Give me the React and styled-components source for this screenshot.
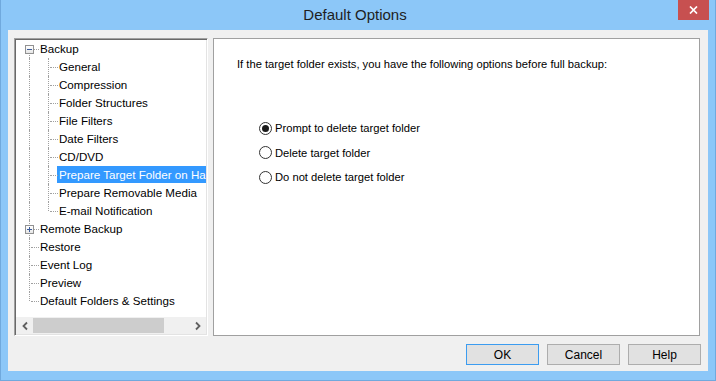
import styled, { createGlobalStyle } from "styled-components";

const GlobalStyle = createGlobalStyle`
  html, body {
    margin: 0;
    padding: 0;
  }
  body {
    width: 716px;
    height: 381px;
    overflow: hidden;
    font-family: "Liberation Sans", Arial, sans-serif;
    color: #000;
  }
`;

const Window = styled.div`
  width: 716px;
  height: 381px;
  box-sizing: border-box;
  background: #8cc7f8;
  border: 1px solid #70a9dd;
  border-top: none;
  padding: 0 7px 9px;
  display: flex;
  flex-direction: column;
`;

const TitleBar = styled.div`
  height: 30px;
  margin: 0 -7px;
  padding-right: 6px;
  display: grid;
  grid-template-columns: 1fr auto 1fr;
  align-items: start;
`;

const Title = styled.div`
  grid-column: 2;
  font-size: 15px;
  line-height: 30px;
  color: #1e1e1e;
`;

const CloseButton = styled.div`
  grid-column: 3;
  justify-self: end;
  width: 31px;
  height: 20px;
  background: #c75050;
  display: flex;
  align-items: center;
  justify-content: center;
`;

const Content = styled.div`
  flex: 1;
  background: #f0f0f0;
  padding: 8px 8px 6px 6px;
  display: flex;
  flex-direction: column;
`;

const Main = styled.div`
  height: 298px;
  display: flex;
  gap: 5px;
`;

const TreePanel = styled.div`
  width: 194px;
  box-sizing: border-box;
  border: 1px solid;
  border-color: #a0a0a0 #ffffff #ffffff #a0a0a0;
  box-shadow: inset 1px 1px #696969, inset -1px -1px #e3e3e3;
  padding: 1px;
  background: #fff;
  display: flex;
  flex-direction: column;
`;

const TreeList = styled.div`
  flex: 1;
  overflow: hidden;
  font-size: 11.6px;
`;

const Row = styled.div`
  height: 18px;
  padding-left: 4px;
  display: flex;
  white-space: nowrap;
`;

const Guide = styled.div`
  position: relative;
  flex: none;
  width: 19px;
  height: 18px;
  display: flex;
  align-items: center;
  justify-content: center;

  &::before {
    content: "";
    display: ${(p) => (p.$line === "none" ? "none" : "block")};
    position: absolute;
    left: 9px;
    top: ${(p) => (p.$line === "bottom" ? "9px" : "0")};
    height: ${(p) => (p.$line === "full" ? "18px" : "9px")};
    border-left: 1px dotted #a0a0a0;
  }

  &::after {
    content: "";
    display: ${(p) => (p.$stub ? "block" : "none")};
    position: absolute;
    left: 11px;
    right: 0;
    top: 9px;
    border-top: 1px dotted #a0a0a0;
  }
`;

const Expander = styled.div`
  position: relative;
  z-index: 1;
  width: 9px;
  height: 9px;
  box-sizing: border-box;
  margin: 1px 1px 0 0;
  border: 1px solid #919191;
  background: linear-gradient(#ffffff, #e6e6e6);

  &::before {
    content: "";
    position: absolute;
    left: 1px;
    top: 3px;
    width: 5px;
    height: 1px;
    background: #3b5b9b;
  }

  &::after {
    content: "";
    display: ${(p) => (p.$open ? "none" : "block")};
    position: absolute;
    left: 3px;
    top: 1px;
    width: 1px;
    height: 5px;
    background: #3b5b9b;
  }
`;

const Label = styled.div`
  height: 17px;
  line-height: 17px;
  margin-left: -1px;
  padding: 0 2px;
  background: ${(p) => (p.$selected ? "#3399ff" : "transparent")};
  color: ${(p) => (p.$selected ? "#fff" : "#000")};
`;

const HScroll = styled.div`
  height: 17px;
  flex: none;
  background: #f0f0f0;
  display: flex;
  align-items: center;
`;

const ScrollArrow = styled.div`
  width: 17px;
  height: 17px;
  display: flex;
  align-items: center;
  justify-content: center;
`;

const Thumb = styled.div`
  width: 131px;
  height: 15px;
  background: #cdcdcd;
`;

const Track = styled.div`
  flex: 1;
`;

const OptionsPanel = styled.div`
  flex: 1;
  background: #fff;
  border: 1px solid #a0a0a0;
  padding: 18px 0 0 23px;
  font-size: 11.2px;
`;

const Intro = styled.div`
  line-height: 14px;
`;

const RadioList = styled.div`
  margin-top: 45px;
  padding-left: 22px;
  display: flex;
  flex-direction: column;
`;

const RadioRow = styled.div`
  height: 24.5px;
  display: flex;
  align-items: center;
  gap: 3px;
`;

const RadioCircle = styled.div`
  width: 13px;
  height: 13px;
  box-sizing: border-box;
  border-radius: 50%;
  border: 1px solid #333;
  background: #fff;
  display: flex;
  align-items: center;
  justify-content: center;

  &::after {
    content: "";
    display: ${(p) => (p.$checked ? "block" : "none")};
    width: 7px;
    height: 7px;
    border-radius: 50%;
    background: #1a1a1a;
  }
`;

const ButtonRow = styled.div`
  margin-top: 8px;
  margin-right: -1px;
  display: flex;
  justify-content: flex-end;
  gap: 8px;
`;

const Button = styled.div`
  width: 73px;
  height: 21px;
  box-sizing: border-box;
  border: 1px solid ${(p) => (p.$default ? "#3c9cf0" : "#adadad")};
  background: #e1e1e1;
  font-size: 12px;
  display: flex;
  align-items: center;
  justify-content: center;
`;

const tree = [
  { label: "Backup", level: 0, line: "bottom", expander: "open" },
  { label: "General", level: 1, line: "full" },
  { label: "Compression", level: 1, line: "full" },
  { label: "Folder Structures", level: 1, line: "full" },
  { label: "File Filters", level: 1, line: "full" },
  { label: "Date Filters", level: 1, line: "full" },
  { label: "CD/DVD", level: 1, line: "full" },
  { label: "Prepare Target Folder on Hard Disk", level: 1, line: "full", selected: true },
  { label: "Prepare Removable Media", level: 1, line: "full" },
  { label: "E-mail Notification", level: 1, line: "top" },
  { label: "Remote Backup", level: 0, line: "full", expander: "closed" },
  { label: "Restore", level: 0, line: "full" },
  { label: "Event Log", level: 0, line: "full" },
  { label: "Preview", level: 0, line: "full" },
  { label: "Default Folders & Settings", level: 0, line: "top" },
];

const options = [
  { label: "Prompt to delete target folder", checked: true },
  { label: "Delete target folder" },
  { label: "Do not delete target folder" },
];

function Chevron({ dir }) {
  const d = dir === "left" ? "M6 1.5 L2.5 5 L6 8.5" : "M2 1.5 L5.5 5 L2 8.5";
  return (
    <svg width="8" height="10" viewBox="0 0 8 10">
      <path d={d} fill="none" stroke="#606060" strokeWidth="1.8" />
    </svg>
  );
}

export default function App() {
  return (
    <>
      <GlobalStyle />
      <Window>
        <TitleBar>
          <Title>Default Options</Title>
          <CloseButton>
            <svg width="9" height="8" viewBox="0 0 9 8">
              <path d="M1 0.5 L8 7.5 M8 0.5 L1 7.5" stroke="#fff" strokeWidth="1.7" />
            </svg>
          </CloseButton>
        </TitleBar>
        <Content>
          <Main>
            <TreePanel>
              <TreeList>
                {tree.map((item) => (
                  <Row key={item.label}>
                    {item.level === 0 ? (
                      <Guide $line={item.line} $stub>
                        {item.expander && <Expander $open={item.expander === "open"} />}
                      </Guide>
                    ) : (
                      <>
                        <Guide $line="full" />
                        <Guide $line={item.line} $stub />
                      </>
                    )}
                    <Label $selected={item.selected}>{item.label}</Label>
                  </Row>
                ))}
              </TreeList>
              <HScroll>
                <ScrollArrow>
                  <Chevron dir="left" />
                </ScrollArrow>
                <Thumb />
                <Track />
                <ScrollArrow>
                  <Chevron dir="right" />
                </ScrollArrow>
              </HScroll>
            </TreePanel>
            <OptionsPanel>
              <Intro>
                If the target folder exists, you have the following options before full backup:
              </Intro>
              <RadioList>
                {options.map((o) => (
                  <RadioRow key={o.label}>
                    <RadioCircle $checked={o.checked} />
                    {o.label}
                  </RadioRow>
                ))}
              </RadioList>
            </OptionsPanel>
          </Main>
          <ButtonRow>
            <Button $default>OK</Button>
            <Button>Cancel</Button>
            <Button>Help</Button>
          </ButtonRow>
        </Content>
      </Window>
    </>
  );
}
